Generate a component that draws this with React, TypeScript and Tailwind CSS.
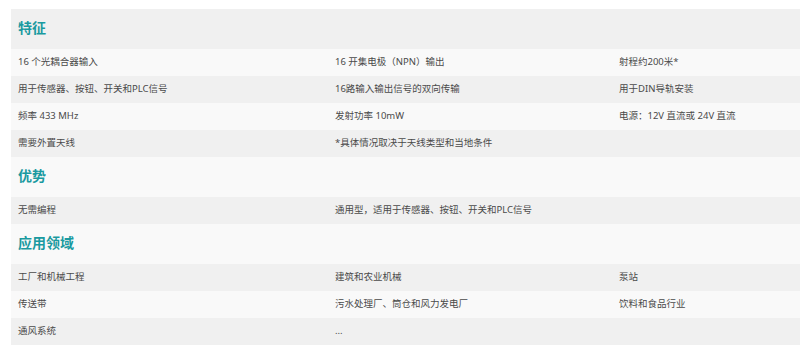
const SECTIONS = [
  {
    title: "特征",
    rows: [
      ["16 个光耦合器输入", "16 开集电极（NPN）输出", "射程约200米*"],
      ["用于传感器、按钮、开关和PLC信号", "16路输入输出信号的双向传输", "用于DIN导轨安装"],
      ["频率 433 MHz", "发射功率 10mW", "电源：12V 直流或 24V 直流"],
      ["需要外置天线", "*具体情况取决于天线类型和当地条件", ""],
    ],
  },
  {
    title: "优势",
    rows: [["无需编程", "通用型，适用于传感器、按钮、开关和PLC信号", ""]],
  },
  {
    title: "应用领域",
    rows: [
      ["工厂和机械工程", "建筑和农业机械", "泵站"],
      ["传送带", "污水处理厂、筒仓和风力发电厂", "饮料和食品行业"],
      ["通风系统", "...", ""],
    ],
  },
];

export default function App() {
  let idx = 0;
  return (
    <div
      className="min-h-[359px] bg-white pt-[9px] pl-[11px]"
      style={{ fontFamily: '"Noto Sans", "Noto Sans CJK SC", sans-serif' }}
    >
      <div className="flex flex-col">
        {SECTIONS.map((section) => {
          const headBg = idx++ % 2 === 0 ? "bg-[#f0f0f0]" : "bg-[#f9f9f9]";
          return (
            <div key={section.title} className="flex flex-col">
              <div className={`flex h-[40px] items-center px-[7px] pb-[2px] ${headBg}`}>
                <h2 className="text-[14px] font-bold leading-none text-[#1a9aa0]">
                  {section.title}
                </h2>
              </div>
              {section.rows.map((row, i) => {
                const bg = idx++ % 2 === 0 ? "bg-[#f0f0f0]" : "bg-[#f9f9f9]";
                return (
                  <div
                    key={i}
                    className={`grid h-[27px] grid-cols-[317px_284px_1fr] items-center text-[9.5px] text-[#4a4a4a] ${bg}`}
                  >
                    {row.map((cell, j) => (
                      <div key={j} className="truncate px-[7px]">
                        {cell}
                      </div>
                    ))}
                  </div>
                );
              })}
            </div>
          );
        })}
      </div>
    </div>
  );
}
